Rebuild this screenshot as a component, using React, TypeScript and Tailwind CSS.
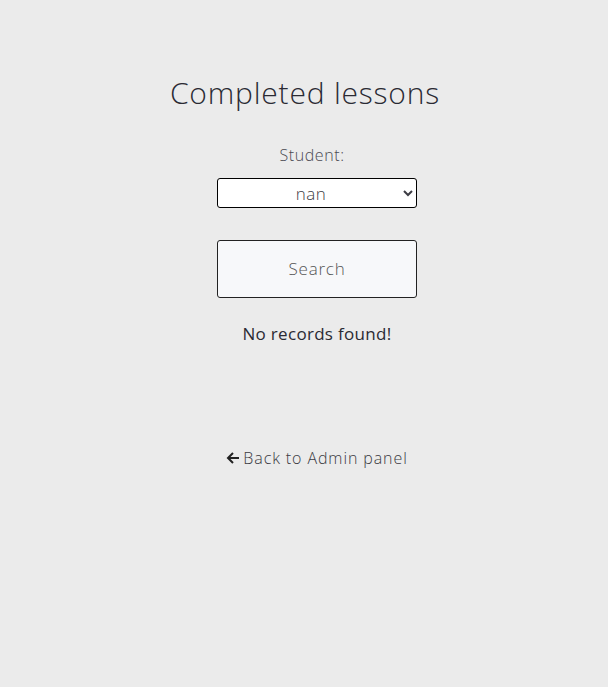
export default function App() {
  return (
    <div
      className="min-h-[687px] bg-[#ebebeb] text-[#33333b] flex flex-col items-center"
      style={{ fontFamily: '"Open Sans", "Noto Sans", sans-serif' }}
    >
      <h1 className="mt-[72px] ml-[2px] text-[30px] leading-[42px] font-light tracking-[0.8px] text-[#2a2a33]">
        Completed lessons
      </h1>
      <div className="mt-[30px] ml-[26px] flex flex-col items-center">
        <label className="text-[16px] leading-[22px] text-[#4a4a52] font-light tracking-[0.6px] -ml-[10px]">
          Student:
        </label>
        <select className="mt-[12px] w-[200px] h-[30px] bg-white border border-black rounded-[3px] text-center text-[17px] text-[#3c3c44] font-light tracking-[0.5px]">
          <option>nan</option>
        </select>
        <button className="mt-[32px] w-[200px] h-[58px] bg-[#f7f8fa] border border-[#222] rounded-[3px] text-[17px] text-[#555] font-light tracking-[0.8px]">
          Search
        </button>
        <p className="mt-[24px] text-[17px] leading-[24px] font-medium tracking-[0.3px] text-[#2a2a33]">
          No records found!
        </p>
        <a
          className="mt-[100px] flex items-center gap-[3px] text-[16px] text-[#3a3a42] font-light tracking-[0.9px]"
          href="#"
        >
          <svg width="14" height="14" viewBox="0 0 14 14" fill="none" stroke="#222" strokeWidth="2">
            <path d="M13 7H2M7 2L2 7l5 5" />
          </svg>
          Back to Admin panel
        </a>
      </div>
    </div>
  );
}
